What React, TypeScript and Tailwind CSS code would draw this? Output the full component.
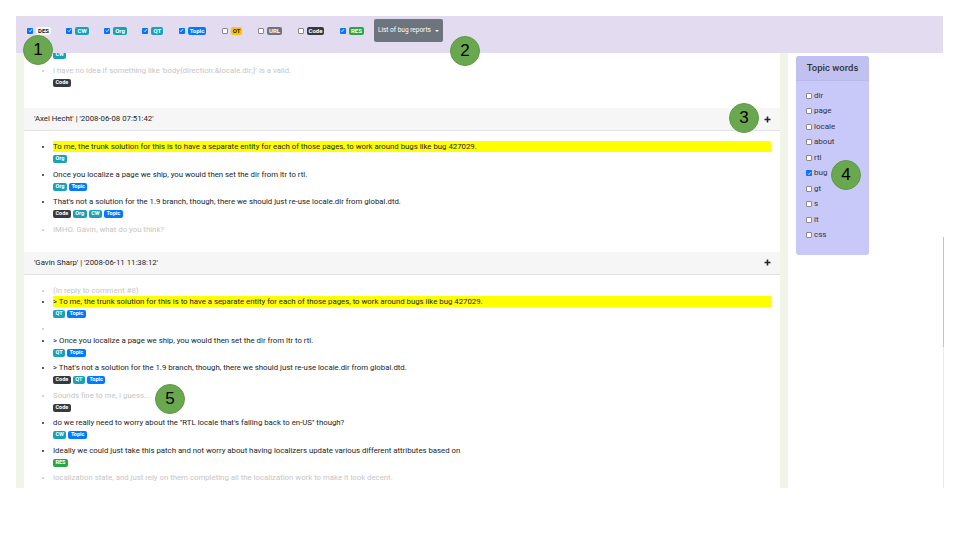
import React from 'react'

type Tag = 'DES' | 'CW' | 'Org' | 'QT' | 'Topic' | 'OT' | 'URL' | 'Code' | 'RES'

const tagColors: Record<Tag, string> = {
  DES: 'bg-[#f8f9fa] text-[#212529]',
  CW: 'bg-[#17a2b8] text-white',
  Org: 'bg-[#17a2b8] text-white',
  QT: 'bg-[#17a2b8] text-white',
  Topic: 'bg-[#007bff] text-white',
  OT: 'bg-[#ffc107] text-[#212529]',
  URL: 'bg-[#6c757d] text-white',
  Code: 'bg-[#343a40] text-white',
  RES: 'bg-[#28a745] text-white',
}

type Entry = { text: string; tags?: Tag[]; gray?: boolean; hl?: boolean }

const filters: { tag: Tag; on: boolean }[] = [
  { tag: 'DES', on: true },
  { tag: 'CW', on: true },
  { tag: 'Org', on: true },
  { tag: 'QT', on: true },
  { tag: 'Topic', on: true },
  { tag: 'OT', on: false },
  { tag: 'URL', on: false },
  { tag: 'Code', on: false },
  { tag: 'RES', on: true },
]

const topicWords = ['dir', 'page', 'locale', 'about', 'rtl', 'bug', 'gt', 's', 'it', 'css']

const trunk = 'To me, the trunk solution for this is to have a separate entity for each of those pages, to work around bugs like bug 427029.'
const once = 'Once you localize a page we ship, you would then set the dir from ltr to rtl.'
const notSol = "That's not a solution for the 1.9 branch, though, there we should just re-use locale.dir from global.dtd."

const comments: { author: string; entries: Entry[] }[] = [
  {
    author: "'Axel Hecht' | '2008-06-08 07:51:42'",
    entries: [
      { text: trunk, tags: ['Org'], hl: true },
      { text: once, tags: ['Org', 'Topic'] },
      { text: notSol, tags: ['Code', 'Org', 'CW', 'Topic'] },
      { text: 'IMHO. Gavin, what do you think?', gray: true },
    ],
  },
  {
    author: "'Gavin Sharp' | '2008-06-11 11:38:12'",
    entries: [
      { text: '(In reply to comment #8)', gray: true },
      { text: '> ' + trunk, tags: ['QT', 'Topic'], hl: true },
      { text: '', gray: true },
      { text: '> ' + once, tags: ['QT', 'Topic'] },
      { text: '> ' + notSol, tags: ['Code', 'QT', 'Topic'] },
      { text: 'Sounds fine to me, I guess...', tags: ['Code'], gray: true },
      { text: 'do we really need to worry about the "RTL locale that\'s falling back to en-US" though?', tags: ['CW', 'Topic'] },
      { text: 'Ideally we could just take this patch and not worry about having localizers update various different attributes based on', tags: ['RES'] },
      { text: 'localization state, and just rely on them completing all the localization work to make it look decent.', gray: true },
    ],
  },
]

const Badge = ({ tag, tight }: { tag: Tag; tight?: boolean }) => (
  <span
    className={`inline-flex h-[8px] items-center rounded-[2px] font-bold leading-none ${tight ? 'px-[2px] text-[6px]' : 'px-[2.5px] text-[5.5px]'} ${tagColors[tag]}`}
  >
    {tag}
  </span>
)

const Check = ({ on }: { on: boolean }) =>
  on ? (
    <span className="flex h-[6px] w-[6px] items-center justify-center rounded-[1px] bg-[#0075ff]">
      <svg width="5" height="5" viewBox="0 0 5 5">
        <path d="M1 2.6 L2 3.6 L4 1.2" fill="none" stroke="white" strokeWidth="0.9" />
      </svg>
    </span>
  ) : (
    <span className="h-[6px] w-[6px] rounded-[1px] border border-[#8a8a8a] bg-white" />
  )

const Item = ({ text, tags, gray, hl }: Entry) => (
  <li className={gray ? 'text-[#c6c6c6]' : 'text-[#212529]'}>
    <div className={`min-h-[11px] leading-[11px] ${hl ? 'bg-[#ffff00]' : ''}`}>{text}</div>
    {tags && (
      <div className="mt-[3px] mb-[5.5px] flex gap-[2px]">
        {tags.map((t) => (
          <Badge key={t} tag={t} />
        ))}
      </div>
    )}
  </li>
)

const Plus = () => (
  <svg width="7" height="7" viewBox="0 0 7 7">
    <path d="M3.5 0.5v6M0.5 3.5h6" stroke="#222" strokeWidth="1.6" />
  </svg>
)

const Marker = ({ n, className }: { n: number; className: string }) => (
  <div
    className={`absolute flex h-[30px] w-[30px] items-center justify-center rounded-full border border-[#5e9a45] bg-[#6aa84f] font-['Liberation_Sans',sans-serif] text-[17px] text-black ${className}`}
  >
    {n}
  </div>
)

export default function App() {
  return (
    <div className="relative h-[540px] w-[960px] overflow-hidden bg-white font-['Roboto',sans-serif] text-[7.8px] text-[#212529]">
      <div className="ml-[16px] flex h-[488px] w-[927px] flex-col pt-[16px]">
        {/* filter bar */}
        <div className="flex h-[37px] shrink-0 items-start bg-[#e3dbf0] pl-[11px] pt-[3px]">
          <div className="flex h-[23px] items-center gap-[15.5px]">
            {filters.map((f) => (
              <div key={f.tag} className="flex items-center gap-[3px]">
                <Check on={f.on} />
                <Badge tag={f.tag} tight />
              </div>
            ))}
          </div>
          <button className="ml-[10px] flex h-[23px] items-center rounded-[2px] bg-[#6c757d] px-[4px] text-[6.5px] text-white">
            List of bug reports
            <span className="ml-[4px] inline-block h-0 w-0 border-x-[2.5px] border-t-[2.5px] border-x-transparent border-t-white" />
          </button>
        </div>

        <div className="flex min-h-0 flex-1 bg-[#f1f4e8] pl-[8px]">
          {/* comments */}
          <div className="w-[756px] overflow-hidden bg-white">
            <div className="-mt-[2px] pl-[29px]">
              <div className="mb-[5.5px] flex gap-[2px]">
                <Badge tag="CW" />
              </div>
            </div>
            <ul className="list-disc pb-[16px] pl-[29px] pr-[9px]">
              <Item text="I have no idea if something like 'body{direction:&locale.dir;}' is a valid." tags={['Code']} gray />
            </ul>
            {comments.map((c) => (
              <div key={c.author}>
                <div className="flex h-[23px] items-center justify-between border-b border-[#e2e2e2] bg-[#f6f6f6] pl-[10px] pr-[9px]">
                  <span>{c.author}</span>
                  <Plus />
                </div>
                <ul className="list-disc pb-[17px] pl-[29px] pr-[9px] pt-[10px]">
                  {c.entries.map((e, i) => (
                    <Item key={i} {...e} />
                  ))}
                </ul>
              </div>
            ))}
          </div>

          {/* topic words */}
          <div className="ml-[8px] flex-1 bg-white pl-[8px] pt-[3px]">
            <div className="w-[73px] overflow-hidden rounded-[3px] bg-[#c9c9f9]">
              <div className="flex h-[25px] items-center justify-center border-b border-[#b8b9ea] bg-[#c0c1f0] text-[9.5px] font-medium text-[#333]">
                Topic words
              </div>
              <div className="pb-[12px] pl-[10px] pt-[7px]">
                {topicWords.map((w) => (
                  <div key={w} className="flex h-[15.5px] items-center gap-[2px] text-[8px] text-[#333]">
                    <Check on={w === 'bug'} />
                    <span>{w}</span>
                  </div>
                ))}
              </div>
            </div>
          </div>
        </div>
      </div>

      {/* scroll track */}
      <div className="absolute left-[943px] top-[237px] h-[110px] w-px bg-[#c2c2c2]" />
      <div className="absolute left-[943px] top-[347px] h-[141px] w-px bg-[#ebebeb]" />

      {/* annotation markers */}
      <Marker n={1} className="left-[23px] top-[35px]" />
      <Marker n={2} className="left-[450px] top-[36px]" />
      <Marker n={3} className="left-[729px] top-[103px]" />
      <Marker n={4} className="left-[831px] top-[160px]" />
      <Marker n={5} className="left-[155px] top-[384px]" />
    </div>
  )
}
